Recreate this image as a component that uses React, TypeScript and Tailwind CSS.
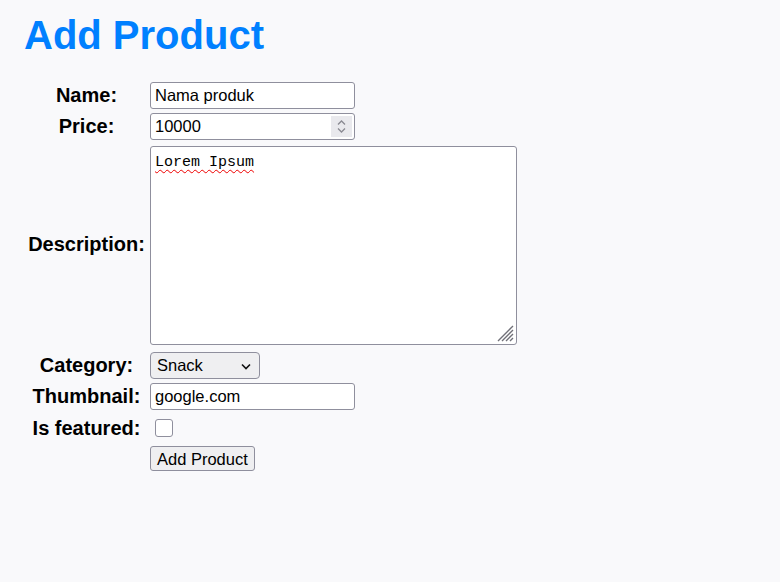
export default function App() {
    const inputCls = 'block w-[205px] h-[27px] border border-[#8f8f9d] rounded-[3px] bg-white px-[4px] text-[16.5px] text-black outline-none';
    const thCls = 'p-[1px] text-[20px] leading-[23px] font-bold text-center';

    return (
        <div className="min-h-[582px] bg-[#f9f9fb] px-[24px] pt-[12px] font-['Liberation_Sans',Arial,sans-serif] text-black">
            <h1 className="text-[40px] font-bold leading-[46px] text-[#0080ff] mb-[21px]">Add Product</h1>
            <table className="border-separate border-spacing-[2px]">
                <tbody>
                    <tr>
                        <th className={`w-[121px] ${thCls}`}>Name:</th>
                        <td className="p-[1px]">
                            <input type="text" defaultValue="Nama produk" className={inputCls} />
                        </td>
                    </tr>
                    <tr>
                        <th className={thCls}>Price:</th>
                        <td className="p-[1px]">
                            <div className="relative w-[205px]">
                                <input type="text" defaultValue="10000" className={inputCls} />
                                <div className="absolute right-[3px] top-[3px] w-[21px] h-[21px] bg-[#e9e9ed] flex flex-col items-center justify-center gap-[3px]">
                                    <svg width="9" height="5" viewBox="0 0 9 5" fill="none">
                                        <path d="M1 4.5L4.5 1L8 4.5" stroke="#8a8a92" strokeWidth="1.3" />
                                    </svg>
                                    <svg width="9" height="5" viewBox="0 0 9 5" fill="none">
                                        <path d="M1 0.5L4.5 4L8 0.5" stroke="#8a8a92" strokeWidth="1.3" />
                                    </svg>
                                </div>
                            </div>
                        </td>
                    </tr>
                    <tr>
                        <th className={thCls}>Description:</th>
                        <td className="p-[1px] pt-[3px]">
                            <div className="relative w-[367px]">
                                <textarea
                                    defaultValue="Lorem Ipsum"
                                    spellCheck={false}
                                    className="block resize-none w-[367px] h-[199px] border border-[#8f8f9d] rounded-[3px] bg-white px-[4px] pt-[6px] font-['Liberation_Mono','Courier_New',monospace] text-[15px] leading-[20px] text-black outline-none underline decoration-wavy decoration-[#e00] decoration-1 underline-offset-[3px]"
                                />
                                {/* resize grip */}
                                <svg className="absolute right-[2px] bottom-[2px]" width="19" height="19" viewBox="0 0 19 19" fill="none">
                                    <path d="M17 2L2 17M17 6L6 17M17 10L10 17M17 14L14 17" stroke="#707078" strokeWidth="1.4" />
                                </svg>
                            </div>
                        </td>
                    </tr>
                    <tr>
                        <th className={`${thCls} pt-[4px]`}>Category:</th>
                        <td className="p-[1px] pt-[4px]">
                            <div className="relative w-[110px] h-[27px] border border-[#8f8f9d] rounded-[4px] bg-[#efeff1] flex items-center pl-[6px] text-[16.5px]">
                                Snack
                                <svg className="absolute right-[8px] top-[10px]" width="10" height="7" viewBox="0 0 10 7" fill="none">
                                    <path d="M1 1.5L5 5.5L9 1.5" stroke="#111" strokeWidth="1.6" />
                                </svg>
                            </div>
                        </td>
                    </tr>
                    <tr>
                        <th className={thCls}>Thumbnail:</th>
                        <td className="p-[1px]">
                            <input type="text" defaultValue="google.com" className={inputCls} />
                        </td>
                    </tr>
                    <tr>
                        <th className={`${thCls} pt-[4px]`}>Is featured:</th>
                        <td className="p-[1px] pt-[5px] pb-[4px]">
                            <div className="ml-[5px] w-[18px] h-[18px] border border-[#8f8f9d] rounded-[3px] bg-white" />
                        </td>
                    </tr>
                    <tr>
                        <th className="p-[1px]"></th>
                        <td className="p-[1px] pt-[3px]">
                            <button className="h-[25px] px-[6px] border border-[#8f8f9d] rounded-[3px] bg-[#efeff1] text-[16.5px] leading-[20px] text-black">
                                Add Product
                            </button>
                        </td>
                    </tr>
                </tbody>
            </table>
        </div>
    );
}
